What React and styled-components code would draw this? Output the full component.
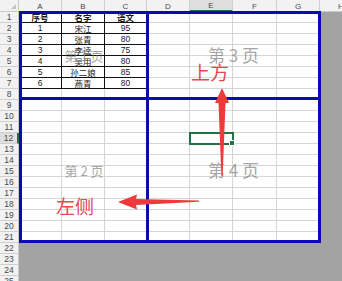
import React from 'react';
import styled, { createGlobalStyle } from 'styled-components';

const GlobalStyle = createGlobalStyle`
  html, body {
    margin: 0;
    padding: 0;
    background: #a3a3a3;
    overflow: hidden;
  }
  body {
    font-family: "Liberation Sans", "Noto Sans CJK SC", sans-serif;
  }
`;

const COLS = [
  { name: 'A', w: 43 },
  { name: 'B', w: 43 },
  { name: 'C', w: 42 },
  { name: 'D', w: 43 },
  { name: 'E', w: 43 },
  { name: 'F', w: 44 },
  { name: 'G', w: 43 },
];

const DATA = [
  ['序号', '名字', '语文'],
  ['1', '宋江', '95'],
  ['2', '张青', '80'],
  ['3', '李逵', '75'],
  ['4', '吴用', '80'],
  ['5', '孙二娘', '85'],
  ['6', '燕青', '80'],
];

const ROWS = Array.from({ length: 25 }, (_, i) => i + 1);
const LAST_ROW = 21;
const SEL = { row: 12, col: 'E' };

const Sheet = styled.div`
  position: relative;
  width: 342px;
  height: 281px;
  overflow: hidden;
  display: grid;
  grid-template-columns: 19px ${COLS.map((c) => c.w + 'px').join(' ')} 43px;
  grid-template-rows: 12px repeat(25, 11px);
  background: #a3a3a3;
  font-size: 9px;
`;

const Corner = styled.div`
  background: #f2f2f2;
  border-right: 1px solid #c9c9c9;
  border-bottom: 1px solid #c9c9c9;
  box-sizing: border-box;
  position: relative;

  &::after {
    content: '';
    position: absolute;
    right: 2px;
    bottom: 2px;
    border-left: 5px solid transparent;
    border-bottom: 5px solid #c2c2c2;
  }
`;

const ColHead = styled.div`
  display: flex;
  align-items: center;
  justify-content: center;
  box-sizing: border-box;
  background: ${(p) => (p.$active ? '#dedede' : '#f2f2f2')};
  border-right: 1px solid #d0d0d0;
  border-bottom: ${(p) => (p.$active ? '2px solid #217346' : '1px solid #c9c9c9')};
  color: #4a4a4a;
  font-size: 8px;
  padding-top: 1px;
`;

const RowHead = styled.div`
  display: flex;
  align-items: center;
  justify-content: center;
  box-sizing: border-box;
  background: ${(p) => (p.$active ? '#dedede' : '#f2f2f2')};
  border-bottom: 1px solid #d0d0d0;
  border-right: ${(p) => (p.$active ? '2px solid #217346' : '1px solid #c9c9c9')};
  color: #4a4a4a;
  font-size: 8.5px;
`;

const Cell = styled.div`
  position: relative;
  display: flex;
  align-items: center;
  justify-content: center;
  box-sizing: border-box;
  white-space: nowrap;
  color: #1a1a1a;
  font-family: "Liberation Sans", "Noto Sans CJK SC", sans-serif;
  font-size: 8.5px;
  font-weight: ${(p) => (p.$bold ? 700 : 400)};
  background: ${(p) => (p.$out ? '#a3a3a3' : '#ffffff')};
  border-right: 1px solid ${(p) => (p.$out ? 'transparent' : p.$table ? '#111111' : '#d6d6d6')};
  border-bottom: 1px solid ${(p) => (p.$out ? 'transparent' : p.$table ? '#111111' : '#d6d6d6')};
  ${(p) =>
    p.$selected &&
    `
    z-index: 2;
    outline: 2px solid #217346;
    outline-offset: -1px;
    &::after {
      content: '';
      position: absolute;
      right: -3px;
      bottom: -3px;
      width: 4px;
      height: 4px;
      background: #217346;
      border: 1px solid #ffffff;
    }
  `}
`;

const Pages = styled.div`
  position: absolute;
  left: 19px;
  top: 11px;
  width: 302px;
  height: 232px;
  box-sizing: border-box;
  border: 3px solid #0c0cae;
  display: grid;
  grid-template-columns: 127px 169px;
  grid-template-rows: 86px 140px;
  pointer-events: none;
  z-index: 3;
`;

const Page = styled.div`
  box-sizing: border-box;
  display: flex;
  align-items: center;
  justify-content: center;
  border-right: ${(p) => (p.$right ? '3px solid #0c0cae' : 'none')};
  border-bottom: ${(p) => (p.$bottom ? '3px solid #0c0cae' : 'none')};
`;

const Watermark = styled.span`
  font-family: "Noto Sans CJK SC", sans-serif;
  font-size: ${(p) => p.$size}px;
  color: rgba(125, 125, 125, 0.7);
  white-space: pre;
  line-height: 1;
  margin-top: ${(p) => p.$shift || 0}px;
`;

const Arrows = styled.svg`
  position: absolute;
  left: 0;
  top: 0;
  pointer-events: none;
  z-index: 4;
`;

const Note = styled.span`
  position: absolute;
  left: ${(p) => p.$x}px;
  top: ${(p) => p.$y}px;
  z-index: 5;
  font-family: "Noto Sans CJK SC", sans-serif;
  font-size: 19px;
  line-height: 1;
  color: #e8474b;
`;

const App = () => {
  return (
    <>
      <GlobalStyle />
      <Sheet>
        <Corner />
        {COLS.map((c) => (
          <ColHead key={c.name} $active={c.name === SEL.col}>
            {c.name}
          </ColHead>
        ))}
        <ColHead>H</ColHead>

        {ROWS.map((r) => (
          <React.Fragment key={r}>
            <RowHead $active={r === SEL.row}>{r}</RowHead>
            {COLS.map((c, ci) => {
              const inTable = r <= DATA.length && ci < 3;
              return (
                <Cell
                  key={c.name}
                  $out={r > LAST_ROW}
                  $table={inTable}
                  $bold={r === 1 && inTable}
                  $selected={r === SEL.row && c.name === SEL.col}
                >
                  {inTable ? DATA[r - 1][ci] : null}
                </Cell>
              );
            })}
            <Cell $out />
          </React.Fragment>
        ))}

        <Pages>
          <Page $right $bottom>
            <Watermark $size={13} $shift={-1}>第 1 页</Watermark>
          </Page>
          <Page $bottom>
            <Watermark $size={17} $shift={-3}>第 3 页</Watermark>
          </Page>
          <Page $right>
            <Watermark $size={13}>第 2 页</Watermark>
          </Page>
          <Page>
            <Watermark $size={17} $shift={-2}>第 4 页</Watermark>
          </Page>
        </Pages>

        <Arrows width="342" height="281" viewBox="0 0 342 281">
          <polygon
            fill="#ee3a3a"
            points="222,88 229,103 225.5,103 222.6,176 221.4,176 218.5,103 215,103"
          />
          <polygon
            fill="#ee3a3a"
            points="118,202 137,194.5 136,199 199,200.6 199,201.8 136,205 137,209.5"
          />
        </Arrows>

        <Note $x={191} $y={62}>上方</Note>
        <Note $x={56} $y={196}>左侧</Note>
      </Sheet>
    </>
  );
};

export default App;
